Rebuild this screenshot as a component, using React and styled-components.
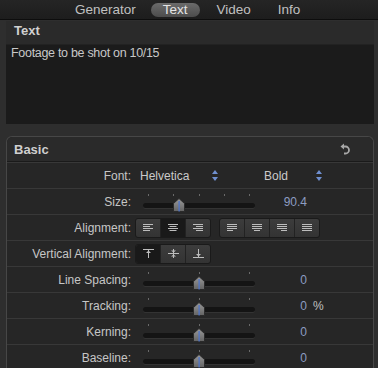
import React from "react";
import styled, { createGlobalStyle } from "styled-components";

const GlobalStyle = createGlobalStyle`
	html, body {
		margin: 0;
		padding: 0;
		background: #2e2e2e;
	}
	body {
		font-family: "Liberation Sans", Arial, sans-serif;
	}
`;

const tabs = ["Generator", "Text", "Video", "Info"];

const rows = [
	{ type: "font", label: "Font:" },
	{ type: "slider", label: "Size:", pos: 0.32, ticks: 5, value: "90.4" },
	{ type: "align", label: "Alignment:" },
	{ type: "valign", label: "Vertical Alignment:" },
	{ type: "slider", label: "Line Spacing:", pos: 0.5, ticks: 3, value: "0" },
	{ type: "slider", label: "Tracking:", pos: 0.5, ticks: 3, value: "0", unit: "%" },
	{ type: "slider", label: "Kerning:", pos: 0.5, ticks: 3, value: "0" },
	{ type: "slider", label: "Baseline:", pos: 0.5, ticks: 3, value: "0" }
];

function Stepper() {
	return (
		<svg width="6" height="11" viewBox="0 0 6 11">
			<path d="M3 0 L6 4 L0 4 Z" fill="#6f8fd0" />
			<path d="M3 11 L6 7 L0 7 Z" fill="#6f8fd0" />
		</svg>
	);
}

function AlignIcon({ kind }) {
	// each line: [start, end] on a 10px wide box
	var lines;
	if (kind === "left") lines = [[0, 10], [0, 7], [0, 10], [0, 7]];
	else if (kind === "center") lines = [[0, 10], [1.5, 8.5], [0, 10], [1.5, 8.5]];
	else if (kind === "right") lines = [[0, 10], [3, 10], [0, 10], [3, 10]];
	else if (kind === "jleft") lines = [[0, 10], [0, 10], [0, 10], [0, 6]];
	else if (kind === "jcenter") lines = [[0, 10], [0, 10], [0, 10], [2, 8]];
	else if (kind === "jright") lines = [[0, 10], [0, 10], [0, 10], [4, 10]];
	else lines = [[0, 10], [0, 10], [0, 10], [0, 10]];
	return (
		<svg width="10" height="8" viewBox="0 0 10 8">
			{lines.map(function(l, i) {
				return <rect key={i} x={l[0]} y={i * 2} width={l[1] - l[0]} height="1" fill="#bdbdbd" />;
			})}
		</svg>
	);
}

function VAlignIcon({ kind }) {
	return (
		<svg width="11" height="9" viewBox="0 0 11 9">
			{kind === "top" && <g fill="#bdbdbd"><rect x="0" y="0" width="11" height="1" /><rect x="5" y="1" width="1" height="8" /><path d="M5.5 1.5 L8 4 L3 4 Z" /></g>}
			{kind === "middle" && <g fill="#bdbdbd"><rect x="0" y="4" width="11" height="1" /><rect x="5" y="0" width="1" height="9" /><path d="M5.5 3.5 L8 1.5 L3 1.5 Z" /><path d="M5.5 5.5 L8 7.5 L3 7.5 Z" /></g>}
			{kind === "bottom" && <g fill="#bdbdbd"><rect x="0" y="8" width="11" height="1" /><rect x="5" y="0" width="1" height="8" /><path d="M5.5 7.5 L8 5 L3 5 Z" /></g>}
		</svg>
	);
}

function UndoIcon() {
	return (
		<svg width="10" height="12" viewBox="0 0 10 12">
			<path d="M3 3.5 H5.5 A3.5 3.5 0 0 1 5.5 10.5 H4" fill="none" stroke="#a8a8a8" strokeWidth="1.8" />
			<path d="M0.5 3.5 L4 0.5 L4 6.5 Z" fill="#a8a8a8" />
		</svg>
	);
}

function Slider({ pos, ticks }) {
	var marks = [];
	for (var i = 0; i < ticks; i++) marks.push(i / (ticks - 1));
	return (
		<SliderBox>
			<Ticks>
				{marks.map(function(m, i) {
					return <Tick key={i} style={{ left: (5 + m * 101) + "px" }} />;
				})}
			</Ticks>
			<Track />
			<Thumb style={{ left: (pos * 112 - 6) + "px" }}>
				<svg width="12" height="14" viewBox="0 0 12 14">
					<defs>
						<linearGradient id="thg" x1="0" y1="0" x2="0" y2="1">
							<stop offset="0" stopColor="#9a9a9a" />
							<stop offset="1" stopColor="#636363" />
						</linearGradient>
					</defs>
					<path d="M6 0.5 L11.5 5.5 L11.5 13.5 L0.5 13.5 L0.5 5.5 Z" fill="url(#thg)" stroke="#2a2a2a" strokeWidth="1" />
					<rect x="5.5" y="3" width="1.2" height="10.5" fill="#4a74d0" />
				</svg>
			</Thumb>
		</SliderBox>
	);
}

function Control({ row }) {
	if (row.type === "font") {
		return (
			<FontControl>
				<PopText width={72}>Helvetica</PopText>
				<Stepper />
				<PopText width={52} style={{ marginLeft: 46 }}>Bold</PopText>
				<Stepper />
			</FontControl>
		);
	}
	if (row.type === "slider") {
		return (
			<SliderControl>
				<Slider pos={row.pos} ticks={row.ticks} />
				<Value>{row.value}</Value>
				{row.unit && <Unit>{row.unit}</Unit>}
			</SliderControl>
		);
	}
	if (row.type === "align") {
		return (
			<ButtonsControl>
				<Segment>
					<SegButton><AlignIcon kind="left" /></SegButton>
					<SegButton selected><AlignIcon kind="center" /></SegButton>
					<SegButton><AlignIcon kind="right" /></SegButton>
				</Segment>
				<Segment>
					<SegButton><AlignIcon kind="jleft" /></SegButton>
					<SegButton><AlignIcon kind="jcenter" /></SegButton>
					<SegButton><AlignIcon kind="jright" /></SegButton>
					<SegButton><AlignIcon kind="full" /></SegButton>
				</Segment>
			</ButtonsControl>
		);
	}
	return (
		<ButtonsControl>
			<Segment>
				<SegButton selected><VAlignIcon kind="top" /></SegButton>
				<SegButton><VAlignIcon kind="middle" /></SegButton>
				<SegButton><VAlignIcon kind="bottom" /></SegButton>
			</Segment>
		</ButtonsControl>
	);
}

export default function App() {
	return (
		<Page>
			<GlobalStyle />
			<TabBar>
				{tabs.map(function(t) {
					return <Tab key={t} active={t === "Text"}>{t}</Tab>;
				})}
			</TabBar>
			<TextSection>
				<SectionHeader>Text</SectionHeader>
				<TextArea>Footage to be shot on 10/15</TextArea>
			</TextSection>
			<Panel>
				<PanelHeader>
					<span>Basic</span>
					<UndoIcon />
				</PanelHeader>
				{rows.map(function(row, i) {
					return (
						<Row key={i}>
							<Label>{row.label}</Label>
							<Control row={row} />
						</Row>
					);
				})}
			</Panel>
		</Page>
	);
}

const Page = styled.div`
	width: 378px;
	height: 368px;
	overflow: hidden;
	background: #2e2e2e;
	display: flex;
	flex-direction: column;
`;

const TabBar = styled.div`
	height: 20px;
	flex-shrink: 0;
	box-sizing: border-box;
	background: linear-gradient(#252525, #1d1d1d);
	border-bottom: 1px solid #0d0d0d;
	display: flex;
	align-items: center;
	padding-left: 67px;
	gap: 4px;
`;

const Tab = styled.div`
	font-size: 13.5px;
	color: ${p => (p.active ? "#e4e4e4" : "#c0c0c0")};
	height: 14px;
	line-height: 14px;
	padding: 0 ${p => (p.active ? "12px" : "8px")};
	margin: 0 ${p => (p.active ? "3px" : "0")};
	border-radius: 7px;
	background: ${p => (p.active ? "linear-gradient(#6b6b6b, #4c4c4c)" : "none")};
	&:nth-child(3) { margin-left: 2px; }
	&:nth-child(4) { margin-left: 7px; }
`;

const TextSection = styled.div`
	margin: 1px 4px 0 6px;
	display: flex;
	flex-direction: column;
`;

const SectionHeader = styled.div`
	height: 23px;
	line-height: 19px;
	padding-left: 8px;
	background: #2a2a2a;
	color: #d0d0d0;
	font-size: 13px;
	font-weight: bold;
	border-bottom: 1px solid #222;
`;

const TextArea = styled.div`
	height: 79px;
	box-sizing: border-box;
	background: #1b1b1b;
	color: #c8c8c8;
	font-size: 12.5px;
	padding: 1px 5px;
	letter-spacing: -0.3px;
`;

const Panel = styled.div`
	margin: 12px 4px 0 6px;
	border: 1px solid #474747;
	border-bottom: none;
	border-radius: 6px 6px 0 0;
	background: #262626;
	flex-grow: 1;
`;

const PanelHeader = styled.div`
	height: 25px;
	box-sizing: border-box;
	display: flex;
	align-items: center;
	justify-content: space-between;
	padding: 0 23px 0 7px;
	color: #cfcfcf;
	font-size: 13px;
	font-weight: bold;
	background: #2a2a2a;
	border-bottom: 1px solid #1a1a1a;
	border-radius: 6px 6px 0 0;
`;

const Row = styled.div`
	height: 26px;
	box-sizing: border-box;
	display: flex;
	align-items: center;
	border-top: 1px solid #383838;
`;

const Label = styled.div`
	width: 124px;
	flex-shrink: 0;
	text-align: right;
	color: #c6c6c6;
	font-size: 12px;
`;

const FontControl = styled.div`
	display: flex;
	align-items: center;
	margin-left: 9px;
	color: #cacaca;
	font-size: 12px;
`;

const PopText = styled.span`
	width: ${p => p.width}px;
`;

const SliderControl = styled.div`
	display: flex;
	align-items: center;
	margin-left: 12px;
`;

const SliderBox = styled.div`
	position: relative;
	width: 112px;
	height: 20px;
`;

const Ticks = styled.div`
	position: absolute;
	left: 0;
	right: 0;
	top: 2px;
	height: 2px;
`;

const Tick = styled.div`
	position: absolute;
	top: 0;
	width: 1px;
	height: 2px;
	background: #6a6a6a;
`;

const Track = styled.div`
	position: absolute;
	left: 0;
	right: 0;
	top: 11px;
	height: 5px;
	border-radius: 3px;
	background: #141414;
	box-shadow: 0 1px 0 #333;
`;

const Thumb = styled.div`
	position: absolute;
	top: 6px;
	width: 12px;
	height: 14px;
	display: flex;
`;

const Value = styled.span`
	width: 52px;
	text-align: right;
	color: #8d9dc2;
	font-size: 12px;
`;

const Unit = styled.span`
	margin-left: 6px;
	color: #c0c0c0;
	font-size: 12px;
`;

const ButtonsControl = styled.div`
	display: flex;
	align-items: center;
	gap: 8px;
	margin-left: 4px;
`;

const Segment = styled.div`
	display: flex;
	height: 18px;
	border-radius: 3px;
	border: 1px solid #1a1a1a;
	overflow: hidden;
	background: linear-gradient(#3c3c3c, #333);
`;

const SegButton = styled.div`
	width: 24px;
	display: flex;
	align-items: center;
	justify-content: center;
	border-left: 1px solid #222;
	background: ${p => (p.selected ? "#191919" : "transparent")};
	&:first-child { border-left: none; }
`;
